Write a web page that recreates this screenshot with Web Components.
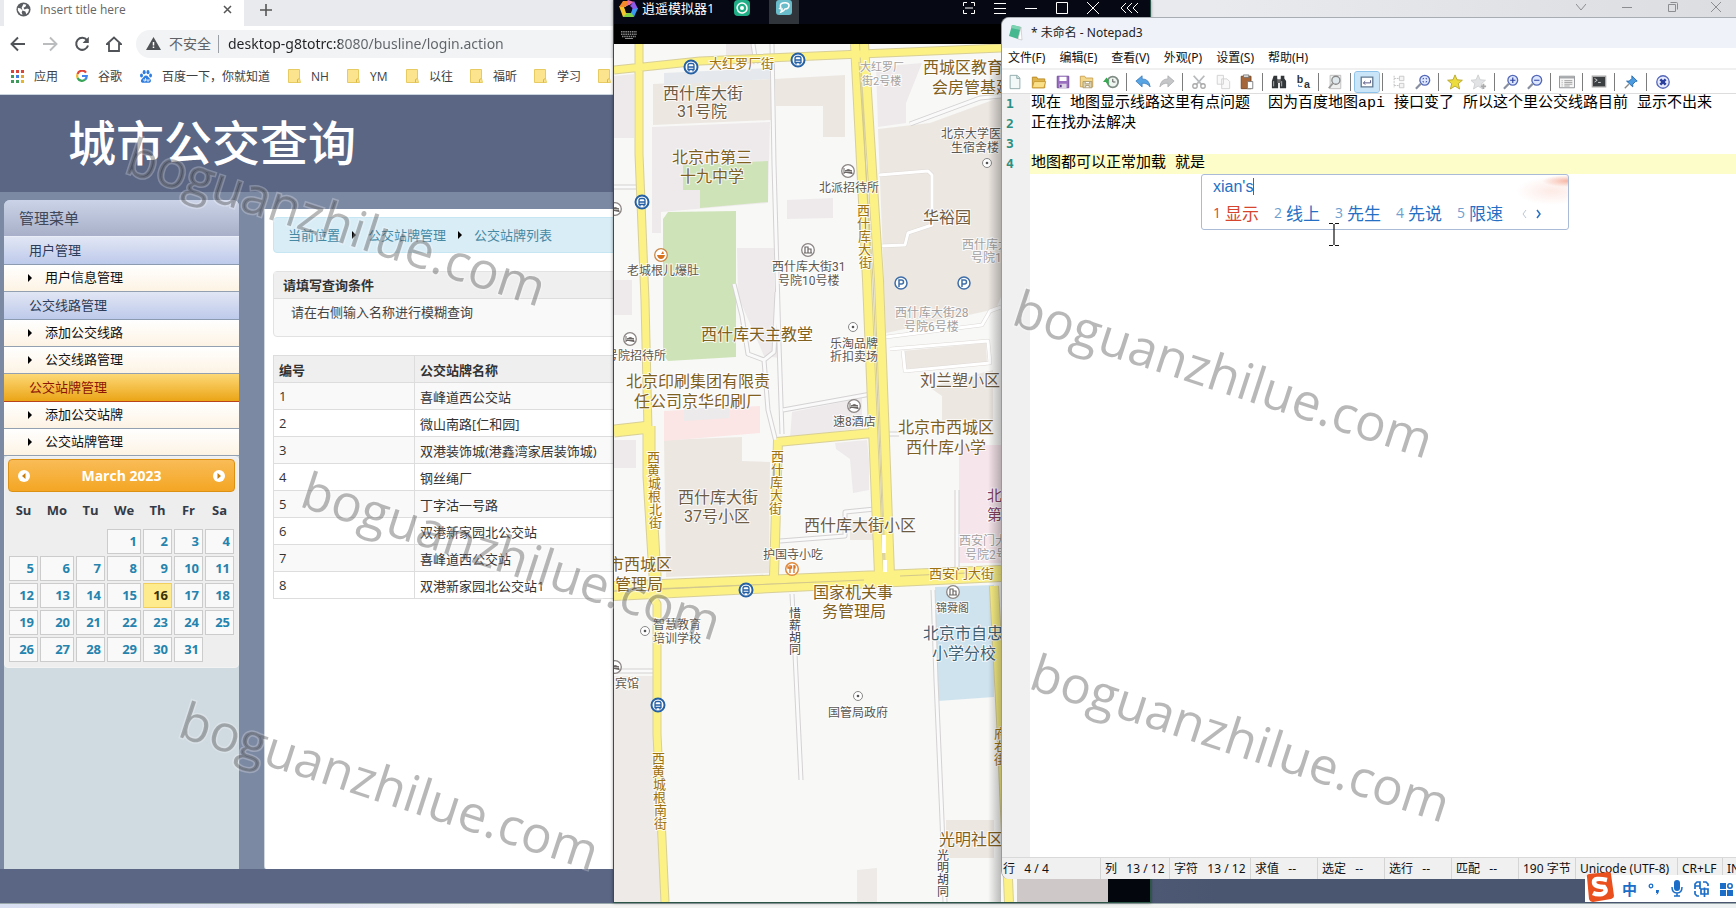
<!DOCTYPE html>
<html lang="zh-CN">
<head>
<meta charset="utf-8">
<title>城市公交查询</title>
<style>
html,body{margin:0;height:100%;overflow:hidden}
body{font-family:"Open Sans","Noto Sans CJK SC",sans-serif;font-size:13px;color:#222}
</style>
</head>
<body>
<desk-top>
  <browser-window slot="back"><bus-site></bus-site></browser-window>
  <emulator-window slot="middle"><city-map></city-map></emulator-window>
  <note-window slot="front"></note-window>
  <ime-popup slot="over"></ime-popup>
  <ime-tray slot="tray"></ime-tray>
  <water-marks slot="marks"></water-marks>
</desk-top>
<script>
const reset = `:host,*{box-sizing:border-box}button{font:inherit;color:inherit;background:none;border:0;padding:0;margin:0}a{color:inherit;text-decoration:none}svg{display:block;flex:none}`;
function define(name, css, html) {
  const tpl = document.createElement('template');
  tpl.innerHTML = `<style>${reset}${css}</style>${html}`;
  customElements.define(name, class extends HTMLElement {
    constructor() {
      super();
      this.attachShadow({mode: 'open'}).append(tpl.content.cloneNode(true));
    }
  });
}

/* ---------- desktop ---------- */
define('desk-top', `
:host{display:grid;grid-template-rows:minmax(0,1fr) 5px;height:100vh;position:relative;overflow:hidden;background:#eceff4}
.bar{background:linear-gradient(90deg,#d9dff2,#e6e9f4 20%,#f3f4f2 30%,#eef1f2);border-top:1px solid #9aa9ab}
::slotted([slot=middle]){position:absolute;left:613px;top:0;bottom:5px;width:538px}
::slotted([slot=front]){position:absolute;left:1001px;top:17px;right:0;bottom:29px}
::slotted([slot=over]){position:absolute;left:1201px;top:174px}
::slotted([slot=tray]){position:absolute;right:0;bottom:6px}
::slotted([slot=marks]){position:absolute;inset:0;pointer-events:none}
`, `<slot name="back"></slot><div class="bar"></div><slot name="middle"></slot><slot name="front"></slot><slot name="over"></slot><slot name="tray"></slot><slot name="marks"></slot>`);

/* ---------- browser ---------- */
const folder = `<svg width="13" height="14" viewBox="0 0 13 14"><path d="M.5.5h11v9l1 4H.5z" fill="#fce38d" stroke="#e6cb63"/><path d="M9.500 13.500v-3l2-1" fill="none" stroke="#d9b946"/></svg>`;
define('browser-window', `
:host{display:grid;grid-template-rows:26px 36px 33px minmax(0,1fr);background:#fff;min-width:0;min-height:0}
.tabs{display:flex;background:linear-gradient(90deg,#e8eaed 70%,#dcdde0);padding-left:4px;align-items:stretch;overflow:hidden}
.tab{display:flex;align-items:center;width:240px;background:#fff;padding:0 12px 7px 12px;color:#666;font-size:12px;gap:9px}
.tab span{flex:1}
.plus{width:44px;padding:0 0 7px;display:grid;place-items:center;border-bottom-left-radius:8px}
.win{margin-left:auto;display:flex;height:13px}
.win button{width:46px;display:grid;place-items:center}
.win button:last-child{width:40px}
.nav{display:flex;align-items:center;padding:0 0 1px 7px}
.nav>button{width:32px;height:32px;padding-right:10px;display:grid;place-items:center}
.omni{flex:1;height:28px;margin-left:1px;border-radius:14px 0 0 14px;background:#f1f3f4;display:flex;align-items:center;padding-left:10px;color:#5f6368;font-size:14px}
.omni span{margin-left:8px;padding-right:7px;border-right:1px solid #9aa0a6;line-height:18px}
.omni input{flex:1;min-width:0;border:0;outline:0;padding:0;margin-left:9px;height:24px;font:14px "Noto Sans",sans-serif;color:transparent;background:linear-gradient(90deg,#202124 112px,#5f6368 112px);-webkit-background-clip:text;background-clip:text}
.marks{display:flex;align-items:center;padding:0 0 4px 11px;font-size:12px;border-bottom:1px solid #c9d4de;white-space:nowrap;overflow:hidden}
.marks a{display:flex;align-items:center;gap:10px;margin-right:18px;color:#3c4043}
.marks svg+span{min-width:19px}
.marks .f{margin-right:17px}
`, `
<div class="tabs"><div class="tab"><svg width="15" height="15" viewBox="0 0 16 16"><circle cx="8" cy="8" r="7.500" fill="#5a5d61"/><path d="M2 6l3 1 2 2-1 2 1 2.500-2-.5L2 9zM8 2l3 1-1 2-2 1 1 2 3-1 2 1-1 3-2 2-1-3-3-1-1-3 1-2z" fill="#fff"/></svg><span>Insert title here</span><button aria-label="关闭标签页"><svg width="9" height="9" viewBox="0 0 9 9"><path d="M1 1l7 7M8 1L1 8" stroke="#555" stroke-width="1.500"/></svg></button></div>
<button class="plus" aria-label="新标签页"><svg width="12" height="12" viewBox="0 0 12 12"><path d="M6 0v12M0 6h12" stroke="#555" stroke-width="1.600"/></svg></button>
<div class="win"><button aria-label="更多"><svg width="10" height="10" viewBox="0 0 10 10"><path d="M0 2l5 6 5-6" fill="none" stroke="#8c8d90"/></svg></button><button aria-label="最小化"><svg width="10" height="10"><path d="M0 5.500h10" stroke="#8c8d90"/></svg></button><button aria-label="还原"><svg width="10" height="10" viewBox="0 0 10 10"><path d="M.5 2.500h7v7h-7zM2.500.5h6q1 0 1 1v6" fill="none" stroke="#8c8d90"/></svg></button><button aria-label="关闭"><svg width="10" height="10" viewBox="0 0 10 10"><path d="M0 0l10 10M10 0L0 10" stroke="#8c8d90"/></svg></button></div></div>
<div class="nav">
<button aria-label="后退"><svg width="16" height="16" viewBox="0 0 16 16"><path d="M15 8H2M8 1.500L1.500 8 8 14.500" fill="none" stroke="#505357" stroke-width="1.900"/></svg></button>
<button aria-label="前进"><svg width="16" height="16" viewBox="0 0 16 16"><path d="M1 8h13M8 1.500L14.500 8 8 14.500" fill="none" stroke="#babcbe" stroke-width="1.900"/></svg></button>
<button aria-label="刷新"><svg width="16" height="16" viewBox="0 0 16 16"><path d="M13 4.200A6 6 0 1 0 14 9.500" fill="none" stroke="#505357" stroke-width="2"/><path d="M14.800.8v6.200H8.600z" fill="#505357"/></svg></button>
<button aria-label="主页"><svg width="16" height="16" viewBox="0 0 16 16"><path d="M1 8l7-6.500L15 8h-2v7H3V8z" fill="none" stroke="#505357" stroke-width="1.800"/></svg></button>
<label class="omni"><svg width="15" height="13" viewBox="0 0 15 13"><path d="M7.500 0L15 13H0z" fill="#4f5256"/><path d="M7.500 5v3.500M7.500 9.500V11" stroke="#fff" stroke-width="1.500"/></svg><span>不安全</span><input value="desktop-g8totrc:8080/busline/login.action" aria-label="网址"></label></div>
<nav class="marks">
<a href="#"><svg width="13" height="13" viewBox="0 0 13 13"><path d="M0 0h3v3H0zM5 0h3v3H5zM10 0h3v3h-3z" fill="#d9453a"/><path d="M0 5h3v3H0z" fill="#3f9a5b"/><path d="M5 5h3v3H5z" fill="#3d7de0"/><path d="M10 5h3v3h-3z" fill="#e0a43a"/><path d="M0 10h3v3H0zM5 10h3v3H5z" fill="#3f9a5b"/><path d="M10 10h3v3h-3z" fill="#e6b72e"/></svg><span>应用</span></a>
<a href="#"><svg width="12" height="12" viewBox="0 0 12 12" fill="none" stroke-width="2.200"><path d="M10 2.600A4.800 4.800 0 0 0 1.600 4" stroke="#e2453a"/><path d="M1.600 4a4.800 4.800 0 0 0 0 4" stroke="#f2b92f"/><path d="M1.600 8A4.800 4.800 0 0 0 9 9.700" stroke="#38a457"/><path d="M9 9.700A5 5 0 0 0 10.800 6H6" stroke="#4284f0"/></svg><span>谷歌</span></a>
<a href="#"><svg width="12" height="13" viewBox="0 0 12 13" fill="#2f7de0"><ellipse cx="1.500" cy="5.500" rx="1.500" ry="2"/><ellipse cx="4.200" cy="2.200" rx="1.500" ry="2.100"/><ellipse cx="8" cy="2.200" rx="1.500" ry="2.100"/><ellipse cx="10.600" cy="5.500" rx="1.400" ry="2"/><path d="M6 5.500c2 0 2.500 2 4 3.300 2 2 .6 4.200-1.500 4-1.600-.2-3.400-.2-5 0C1 13 0 10.600 2 8.800 3.500 7.500 4 5.500 6 5.500z"/><path d="M4 9v2h1.500V8M7 9v2h2V9" stroke="#fff" stroke-width=".8" fill="none"/></svg><span>百度一下，你就知道</span></a>
<a href="#" class="f">${folder}<span>NH</span></a><a href="#" class="f">${folder}<span>YM</span></a><a href="#" class="f">${folder}<span>以往</span></a><a href="#" class="f">${folder}<span>福昕</span></a><a href="#" class="f">${folder}<span>学习</span></a><a href="#" aria-label="书签">${folder}</a>
</nav><slot></slot>`);

/* ---------- bus site ---------- */
define('bus-site', `
:host{display:grid;grid-template-rows:97px minmax(0,1fr) 34px;background:#5a6684;min-height:0}
h1{margin:0;padding:10px 0 0 68px;font:500 48px/70px "Noto Sans CJK SC",sans-serif;color:#fff}
.mid{display:grid;grid-template-columns:235px minmax(0,1fr);column-gap:25px;padding:8px 0 0 4px;background:#7c89a3;min-height:0}
main{background:#fff;border-left:1px solid #cfd6e0;border-bottom-left-radius:6px;margin:9px 0 -3px;padding:8px 0 0 8px}
footer{background:linear-gradient(90deg,#5a6684 50%,#4a5570 70%)}
`, `<h1>城市公交查询</h1><div class="mid"><side-menu></side-menu><main><crumb-bar></crumb-bar><hint-box></hint-box><station-table></station-table></main></div><footer></footer>`);

define('side-menu', `
:host{display:block;background:#cfdae1;border-radius:6px 6px 0 0;overflow:hidden}
h2{margin:0;height:37px;padding-left:15px;font:15px/36px "Noto Sans CJK SC",sans-serif;color:#41485a;background:linear-gradient(#cbd3e8,#a7b0c8);border-bottom:1px solid #e8edf8}
a{display:flex;align-items:center}
.g{height:28px;padding:0 0 3px 25px;background:linear-gradient(#e1e6f4,#becaeb);border-bottom:1px solid #8d9bb0;color:#2c3b57}
.g.on{background:linear-gradient(#fdd876,#eba516);border-bottom-color:#b9431a;color:#8c1505}
.i{height:27px;padding:0 0 3px 24px;gap:13px;background:linear-gradient(#fff,#fdf3e4);border-bottom:1px solid #93a0b2;color:#111}
.i:before{content:"";border:4px solid transparent;border-left-color:#000;border-right:0;margin-top:3px}
`, `<h2>管理菜单</h2><nav>
<a href="#" class="g">用户管理</a><a href="#" class="i">用户信息管理</a>
<a href="#" class="g">公交线路管理</a><a href="#" class="i">添加公交线路</a><a href="#" class="i">公交线路管理</a>
<a href="#" class="g on">公交站牌管理</a><a href="#" class="i">添加公交站牌</a><a href="#" class="i">公交站牌管理</a></nav><date-picker></date-picker>`);

const cells = [...Array(3).fill(0), ...Array.from({length: 31}, (_, i) => i + 1), 0];
const weeks = [0, 1, 2, 3, 4].map(w => '<tr>' + cells.slice(w * 7, w * 7 + 7).map(d => d ? `<td><a href="#"${d === 16 ? ' class="now"' : ''}>${d}</a></td>` : '<td></td>').join('') + '</tr>').join('');
define('date-picker', `
:host{display:block;background:#eee;padding:2px 3px 4px;border:1px solid #f3f3f3;border-radius:4px;font:bold 13px "Open Sans",sans-serif}
header{display:flex;align-items:center;justify-content:space-between;height:33px;padding:0 9px;border:1px solid #dd9114;border-radius:4px;background:linear-gradient(#f9bc57,#f4a624);color:#fff;font-size:14px}
table{width:100%;table-layout:fixed;border-collapse:collapse}
th{height:36px;padding:0;color:#333b47;font-size:13px}
td{padding:1px;height:27px}
td a{display:block;height:25px;line-height:23px;border:1px solid #ccc;background:#f9f9f9;color:#2583ad;text-align:right;padding-right:3px;font-size:13px}
td a.now{background:#fdeb8e;border-color:#f2cf5c;color:#3a3000}
`, `<header><button aria-label="Prev"><svg width="12" height="12" viewBox="0 0 12 12"><circle cx="6" cy="6" r="6" fill="#fff"/><path d="M7.500 3L4 6l3.500 3z" fill="#c77c08"/></svg></button><span>March 2023</span><button aria-label="Next"><svg width="12" height="12" viewBox="0 0 12 12"><circle cx="6" cy="6" r="6" fill="#fff"/><path d="M4.500 3L8 6 4.500 9z" fill="#c77c08"/></svg></button></header>
<table><colgroup><col style="width:31px"><col style="width:36px"><col style="width:31px"><col style="width:36px"><col style="width:31px"><col style="width:31px"><col></colgroup><thead><tr><th>Su</th><th>Mo</th><th>Tu</th><th>We</th><th>Th</th><th>Fr</th><th>Sa</th></tr></thead><tbody>${weeks}</tbody></table>`);

define('crumb-bar', `
:host{display:flex;align-items:center;height:36px;padding-left:14px;background:#d9edf7;border:1px solid #c5e6f2;border-radius:4px;color:#4788a3}
a{padding-bottom:2px}
i{width:4px;margin:0 12px;border:4px solid transparent;border-left-color:#000;border-right:0}
`, `<a href="#">当前位置</a><i></i><a href="#">公交站牌管理</a><i></i><a href="#">公交站牌列表</a>`);

define('hint-box', `
:host{display:block;height:66px;margin:18px 0;border:1px solid #e2e2e2;border-radius:4px;background:#f9f9f9}
h3{margin:0;height:27px;padding-left:9px;font:bold 13px/26px "Noto Sans CJK SC",sans-serif;background:#efefef;border-bottom:1px solid #ddd;color:#333}
p{margin:0;padding-left:17px;line-height:26px;color:#444}
`, `<h3>请填写查询条件</h3><p>请在右侧输入名称进行模糊查询</p>`);

define('station-table', `
:host{display:block}
table{width:100%;border-collapse:collapse;border:1px solid #ddd;table-layout:fixed}
th,td{height:27px;padding:0 5px;text-align:left;border:1px solid #ddd;color:#333}
th{background:#efefef}
tbody tr:nth-child(odd){background:#f9f9f9}
th:first-child{width:141px}
`, `<table><thead><tr><th>编号</th><th>公交站牌名称</th></tr></thead><tbody>${['喜峰道西公交站','微山南路[仁和园]','双港装饰城(港鑫湾家居装饰城)','钢丝绳厂','丁字沽一号路','双港新家园北公交站','喜峰道西公交站','双港新家园北公交站1'].map((n, i) => `<tr><td>${i + 1}</td><td>${n}</td></tr>`).join('')}</tbody></table>`);

/* ---------- emulator ---------- */
define('emulator-window', `
:host{display:grid;grid-template-rows:24px 20px minmax(0,1fr);background:#03060c;border:1px solid #2c5548;border-top:0;box-shadow:0 0 3px #0006}
header{display:flex;align-items:flex-start;background:#060913;color:#fff;padding-left:5px}
header span{width:94px;padding-left:4px;line-height:16px}
.t{display:flex;align-items:flex-start;width:30px;height:24px;margin-right:7px;padding-left:2px}
.t.on{background:#30343b;margin-right:0;padding-left:7px}
.c{margin-left:auto;display:flex;height:16px}
.c button{width:31px;display:grid;place-items:center}
.c button:last-child{width:42px}
.k{background:#000;padding:7px 0 0 7px}
::slotted(*){margin-right:42px}
`, `<header><svg width="19" height="18" viewBox="0 0 19 18"><path d="M9 0l6 2-6 4-6 1z" fill="#ee6ea0"/><path d="M15 1l4 8-5 2-3-5z" fill="#8e58e8"/><path d="M19 8l-4 9-5-3 4-5z" fill="#3b9af0"/><path d="M15 17H4l2-5h6z" fill="#7ed04a"/><path d="M4 17L0 6l5 1 3 6z" fill="#f5c52d"/><path d="M0 7l4-6 5 0-2 6z" fill="#f28a2a"/><path d="M9.500 5l4 3-1.500 5H7L5.500 8z" fill="#060913"/></svg><span>逍遥模拟器1</span>
<button class="t" aria-label="桌面"><svg width="16" height="16" viewBox="0 0 16 16"><rect width="16" height="16" rx="4" fill="#1fae86"/><path d="M3 8a5 5 0 0 1 10 0 5 5 0 0 1-9 3z" fill="none" stroke="#fff" stroke-width="1.500"/><circle cx="8" cy="8" r="2" fill="#fff"/></svg></button>
<button class="t on" aria-label="地图"><svg width="16" height="16" viewBox="0 0 16 16"><rect width="16" height="15" rx="3" fill="#69bcc9"/><path d="M5 8q-2-4 2-5 5-1 6 2 0 4-4 4-1 2-4 3 1-2 1-3-2 0-3-1" fill="none" stroke="#fff" stroke-width="1.600"/></svg></button>
<div class="c">
<button aria-label="全屏"><svg width="12" height="12" viewBox="0 0 12 12"><path d="M.5 4V.5H4M8 .5h3.500V4M11.500 8v3.500H8M4 11.500H.5V8M2 6h8" fill="none" stroke="#fff"/></svg></button>
<button aria-label="菜单"><svg width="12" height="12"><path d="M0 1.500h12M0 6.500h12M0 11.500h12" stroke="#fff"/></svg></button>
<button aria-label="最小化"><svg width="12" height="12"><path d="M0 6.500h12" stroke="#fff"/></svg></button>
<button aria-label="最大化"><svg width="12" height="12"><path d="M.5.5h11v11H.5z" fill="none" stroke="#fff"/></svg></button>
<button aria-label="关闭"><svg width="12" height="12"><path d="M0 0l12 12M12 0L0 12" stroke="#fff"/></svg></button>
<button aria-label="收起"><svg width="18" height="12"><path d="M6 1L1 6l5 5M12 1L7 6l5 5M18 1l-5 5 5 5" fill="none" stroke="#fff"/></svg></button></div></header>
<div class="k"><svg width="16" height="8" viewBox="0 0 16 8"><path d="M0 .8h16M0 3.200h16M1 5.500h14" stroke="#888" stroke-width="1.500" stroke-dasharray="1.500 .7"/><path d="M4 7.500h8" stroke="#888"/></svg></div><slot></slot>`);

/* map labels: x, centre y, size, text, colour */
const B = '#80601f', K = '#6d5b44', G = '#5c5750', L = '#a3a0a0', R = '#9d7110', D = '#454545', P = '#86405c', S = '#44606f';
const labels = [
[663,93,16,'西什库大街',K],[677,111,16,'31号院',K],[672,157,16,'北京市第三',B],[680,176,16,'十九中学',B],
[709,63,13,'大红罗厂街',R],[860,67,11,'大红罗厂',L],[862,81,11,'街2号楼',L],[923,67,16,'西城区教育',B],[932,87,16,'会房管基建',B],
[941,133,12,'北京大学医',G],[951,147,12,'生宿舍楼',G],[819,187,12,'北派招待所',G],[923,217,16,'华裕园',K],
[772,266,12,'西什库大街31',G],[778,280,12,'号院10号楼',G],[962,244,12,'西什库大街',L],[971,257,12,'号院1号',L],
[627,270,12,'老城根儿爆肚',G],[895,312,12,'西什库大街28',L],[904,326,12,'号院6号楼',L],[701,334,16,'西什库天主教堂',B],
[830,343,12,'乐淘品牌',G],[830,356,12,'折扣卖场',G],[606,355,12,'号院招待所',G],[626,381,16,'北京印刷集团有限责',B],[634,401,16,'任公司京华印刷厂',B],
[920,380,16,'刘兰塑小区',K],[833,421,12,'速8酒店',G],[898,427,16,'北京市西城区',B],[906,447,16,'西什库小学',B],
[678,497,16,'西什库大街',K],[684,516,16,'37号小区',K],[804,525,16,'西什库大街小区',K],[763,554,12,'护国寺小吃',G],
[608,564,16,'市西城区',B],[615,584,16,'管理局',B],[987,495,15,'北',P],[987,514,15,'第',P],[959,540,12,'西安门大',L],[965,554,12,'号院2号',L],
[929,573,13,'西安门大街',R],[813,592,16,'国家机关事',B],[822,611,16,'务管理局',B],[936,608,11,'锦舜阁',G],
[923,633,16,'北京市自忠',S],[932,653,16,'小学分校',S],[653,624,12,'智慧教育',G],[653,638,12,'培训学校',G],[615,683,12,'宾馆',G],
[828,712,12,'国管局政府',G],[939,839,16,'光明社区',B]
].map(([x, y, s, t, c]) => `<text x="${x}" y="${Math.round(y + s * .38)}" font-size="${s}" fill="${c}">${t}</text>`).join('');
const columns = [
[857,210,13,'西什库大街',R,1],[647,457,13,'西黄城根北街',R,1],[771,456,13,'西什库大街',R,-1],[789,613,12,'惜薪胡同',D,0],
[652,758,13,'西黄城根南街',R,1],[994,733,13,'府右街',R,0],[937,855,12,'光明胡同',D,0]
].map(([x, y, s, t, c, d]) => `<text x="${[...t].map((_, i) => x + d * Math.floor(i / 2)).join(' ')}" y="${[...t].map((_, i) => y + Math.round(s * .38) + i * (s === 13 ? 13 : 12)).join(' ')}" font-size="${s}" fill="${c}">${t}</text>`).join('');
const pin = (x, y, id) => `<use href="#${id}" x="${x}" y="${y}"/>`;
const pins = [[691,67,'bus'],[798,60,'bus'],[642,202,'bus'],[746,590,'bus'],[658,705,'bus'],[901,283,'park'],[964,283,'park'],
[987,163,'dot'],[853,327,'dot'],[645,631,'dot'],[858,696,'dot'],[848,171,'bed'],[630,339,'bed'],[854,406,'bed'],[615,209,'bed'],[615,667,'bed'],
[808,250,'bld'],[953,592,'bld'],[661,255,'food'],[792,569,'fork']].map(p => pin(...p)).join('');
const lane = 'M772 44l2 120 5 180 3 90M753 44l3 20M614 187h24M792 594l3 60 6 126M933 590l3 90 6 140 3 82M614 671h40M734 284l8 32 6 38 16 6 10-8 3-60M764 360l4 50 8 32M783 410l88-16M780 541l65-5v-24l30-3M957 490v78M887 434h12M910 124l70-26 21-2';
const whiteLane = 'M879 175l49-4 4 4v50l-24 8-3 12-26 1M886 337l96-12 8-14 11-4M890 349l98-8 2 22-85 8-2-20';
const mainRoads = 'M855 44l12 236 12 295M864 44l15 236 11 295M777 442l95-9M778 440l-4 136M614 586l387-16M614 596l240-12 147-7M994 586l7 134 8 182';
const cityRoads = 'M639 44v110l6 146 3 130M648 590l9 14v130l8 168M614 70l86-9 301-13';
const wideRoads = 'M649 426v50l7 116M614 431l36-4';
define('city-map', `
:host{display:block;position:relative;overflow:hidden;background:#f8f8f7}
svg{width:100%;height:100%}
text{font-family:Roboto,"Noto Sans CJK SC",sans-serif;paint-order:stroke;stroke:#fffc;stroke-width:2px}
`, `<svg viewBox="614 44 494 858" preserveAspectRatio="xMinYMin slice" role="img" aria-label="地图">
<defs>
<g id="bus"><circle r="6.500" fill="#fff" stroke="#2660a4" stroke-width="2"/><path d="M-3 2.500v-4q0-2 2-2h2q2 0 2 2v4zM-3 0h6M-2 2.500v2M2 2.500v2" fill="none" stroke="#2660a4" stroke-width="1.300"/></g>
<g id="park"><circle r="6" fill="#fff" stroke="#3f6ea8" stroke-width="1.500"/><path d="M-2 4v-7h2.500q2 0 2 2t-2 2H-2" fill="none" stroke="#3f6ea8" stroke-width="1.500"/></g>
<g id="dot"><circle r="4.500" fill="#fff" stroke="#888"/><circle r="1.300" fill="#555"/></g>
<g id="bed"><circle r="6.300" fill="#fff" stroke="#8b8684" stroke-width="1.300"/><path d="M-4-3v6M-4 1.500h8V3M-3 0q3-3 7 0z" fill="#6b6664" stroke="#6b6664"/></g>
<g id="bld"><circle r="6.300" fill="#fff" stroke="#8b8684" stroke-width="1.300"/><path d="M-3 3v-6h3v6M0-1h3v4M-4 3h8" fill="none" stroke="#6b6664" stroke-width="1.200"/></g>
<g id="food"><circle r="6.300" fill="#fff" stroke="#c98848" stroke-width="1.300"/><path d="M-4 0h8q-1 4-4 4T-4 0zM0-1l2-3 1 3z" fill="#d9721e"/></g>
<g id="fork"><circle r="6.300" fill="#fff" stroke="#e08a3a" stroke-width="1.500"/><path d="M-2-4v8M-4-3.500v2.500h3.500v-2.500M2-4v8M3-3.500v3" fill="none" stroke="#d9721e" stroke-width="1.300"/></g>
<linearGradient id="sh"><stop offset="0" stop-opacity="0"/><stop offset="1" stop-opacity=".25"/></linearGradient>
</defs>
<path fill="#eeeaeb" d="M652 127l118-5-2 81-107 9v21h-9zM614 76l20-2v64h-20zM737 248h37v30l6 80-16-2-26-60zM787 200l46-2v20l-46 1zM876 67l46-4-16 40v20l-28 4zM726 44h26v11l-26 2zM792 412l70-14v30l-72 10zM614 440l22 0v28h-22zM835 443l32-3 2 20v30l-16 3-3-34-14-10zM614 280l18 0v35h-18z"/>
<path fill="#ece7e1" d="M653 84l118-5v41l-118 5zM775 79l70-4v62h-22v-31h-47zM664 440l78-3v24l28 1-1 111-103 4zM878 129l52-6 71-26v200l-5 12-110 24zM902 351l84-8 1 20-84 6zM929 387l64-17v50h-51v-24zM946 820h48v38h-48zM850 520h24v20h-24z"/>
<path d="M614 676h40l5 160 4 66h-49zM857 870l20-2v34h-20z" fill="#edeae7"/>
<path d="M664 73l106-5v11l-106 6z" fill="#e5e9ed"/>
<path d="M683 165l85-4v41l-68 6v-18h-17zM668 212l68-1v146l-68 4-5-6V219z" fill="#cfe3b9"/>
<path d="M664 411l96-5v27l-96 8z" fill="#fbe5e5"/><path d="M959 445h42v118h-42z" fill="#f6e5ea"/>
<path d="M684 408h45v10l-45 3z" fill="#eceaea"/><path d="M935 587l59-2v112l-56 4z" fill="#cfe3ee"/>
<g fill="none" stroke-linejoin="round">
<path d="${lane}" stroke="#d4d2d2" stroke-width="5"/><path d="${lane}" stroke="#fafafa" stroke-width="3"/>
<path d="${whiteLane}" stroke="#ddd9d6" stroke-width="4"/><path d="${whiteLane}" stroke="#fff" stroke-width="3"/>
<g stroke="#d8cf98"><path d="${cityRoads}" stroke-width="9"/><path d="${wideRoads}" stroke-width="13"/><path d="${mainRoads}" stroke-width="10"/></g>
<g stroke="#fbf184"><path d="${cityRoads}" stroke-width="7"/><path d="${wideRoads}" stroke-width="11"/><path d="${mainRoads}" stroke-width="8"/></g>
<path d="M859 62l14 218 11 280M660 589l204-9M900 576l90-4" stroke="#d3c78c"/><path d="M884 535v18M885 560v12" stroke="#fff" stroke-width="4"/>
</g>
${pins}${labels}${columns}
<path d="M988 60h13v842h-13z" fill="url(#sh)"/><path d="M1017 872h91v30h-91z" fill="#cfc8c9"/>
</svg>`);

/* ---------- notepad ---------- */
const ico = {
new:'<path d="M3.500 1.500h8l3 3v12h-11z" fill="#f2f8f8" stroke="#8aa5a5"/><path d="M11 1.500v3.500h3.500" fill="#cfe3e3" stroke="#8aa5a5"/>',
open:'<path d="M1.500 15.500v-12h5l1 2h8v10z" fill="#e0b44c" stroke="#b98a24"/><path d="M1.500 15.500l2-7h13l-2 7z" fill="#fbe08a" stroke="#c99a30"/>',
save:'<path d="M2.500 2.500h13v13h-13z" fill="#9a6fc0" stroke="#70459c"/><path d="M5 3h8v5H5z" fill="#fff"/><path d="M5 11h8v5H5z" fill="#dcd4e4"/><path d="M6.500 12v3" stroke="#5d3a85" stroke-width="2"/>',
saveas:'<path d="M1.500 14.500v-12h5l1 2h8v10z" fill="#f3d88c" stroke="#c9a050"/><path d="M4.500 8.500h10v7h-10z" fill="#dcd2b4" stroke="#a89a70"/><path d="M7 9v2h5V9M7.500 15v-2h4v2" fill="#fff" stroke="#a89a70"/>',
hist:'<circle cx="11" cy="9" r="6" fill="#eef5f0" stroke="#7f8c85" stroke-width="2"/><path d="M11 5.500V9h3M6 9h1" stroke="#444" fill="none"/><path d="M0 9l4-5 3 4H6l1 5-3-3-1-1z" fill="#38a852"/>',
undo:'<path d="M1 8l7-6v3.500q8 0 9 9-3-4.500-9-4v4z" fill="#59a5e4" stroke="#2f74b8" stroke-width=".8"/>',
redo:'<path d="M17 8l-7-6v3.500q-8 0-9 9 3-4.500 9-4v4z" fill="#c4c6c8" stroke="#a6a8aa" stroke-width=".8"/>',
cut:'<path d="M3 2l9 10M15 2L6 12" stroke="#b8babc" stroke-width="2"/><circle cx="4.500" cy="13.500" r="2.500" fill="none" stroke="#aaa" stroke-width="1.500"/><circle cx="13.500" cy="13.500" r="2.500" fill="none" stroke="#aaa" stroke-width="1.500"/>',
copy:'<path d="M2.500 1.500h7v10h-7zM7.500 5.500h6l3 3v8h-9z" fill="#f9f9f9" stroke="#d0d0d0"/>',
paste:'<path d="M2.500 2.500h11v14h-11z" fill="#a5673a" stroke="#774420"/><path d="M5 1h6v3H5z" fill="#d8d8d8" stroke="#666" stroke-width=".8"/><path d="M9.500 8.500h6v8h-6z" fill="#fff" stroke="#777"/>',
find:'<path d="M3 2h4v3l1 2v9H1V8zM11 2h4v3l2 3v8h-7V7l1-2z" fill="#33373a"/><path d="M7 6h4v4H7z" fill="#666"/><path d="M3 8v6M12 8v6" stroke="#bbb"/>',
repl:'<text x="2" y="10" font-size="12" font-weight="bold" fill="#333" font-family="Liberation Sans">b</text><text x="10" y="16" font-size="12" font-weight="bold" fill="#333" font-family="Liberation Sans">a</text><path d="M4 12v2h4" stroke="#36a" fill="none"/>',
view:'<path d="M3.500 1.500h12v15h-12z" fill="#eef0f0" stroke="#bbb"/><circle cx="10" cy="7" r="4.500" fill="#dfe8ec" stroke="#888" stroke-width="1.500"/><path d="M6.500 10.500L2 16" stroke="#999" stroke-width="2"/>',
wrap:'<path d="M2.500 3.500h13v11h-13z" fill="#fff" stroke="#627a90" stroke-width="1.500"/><path d="M13 7v3H5M7 8l-2 2 2 2" fill="none" stroke="#447"/>',
fold:'<path d="M3.500 2v13M3.500 5h6M3.500 13h6" stroke="#bbb" stroke-dasharray="2 1" fill="none"/><path d="M9.500 2.500h5v5h-5zM9.500 10.500h5v5h-5z" fill="#f4f4f4" stroke="#c6c6c6"/>',
zoom:'<circle cx="11" cy="7" r="5.500" fill="#dce6ff" stroke="#5468b8" stroke-width="1.500"/><path d="M6.500 11L1 16.500" stroke="#888fa0" stroke-width="2.500"/>',
star:'<path d="M9 1l2.300 5.500 6 .5-4.600 3.900 1.500 6L9 13.600l-5.200 3.300 1.500-6L.7 7l6-.5z" fill="#ecdc3e" stroke="#b5a52a"/>',
star2:'<path d="M8 1l2.300 5.500 6 .5-4.600 3.900 1.500 6L8 13.600l-5.200 3.300 1.500-6L-.3 7l6-.5z" fill="#e2e3e5" stroke="#ccced0"/><path d="M14 11v6M11 14h6" stroke="#aaa" stroke-width="2"/>',
list:'<path d="M.5 2.500h17v13H.5z" fill="#f6f6f6" stroke="#85898c"/><path d="M1 4h16" stroke="#a6a9ab" stroke-width="2"/><path d="M3 7.500h1M3 9.500h1M3 11.500h1M3 13.500h1M6 7.500h9M6 9.500h9M6 11.500h9M6 13.500h6" stroke="#999"/>',
term:'<path d="M1.500 2.500h15v12h-15z" fill="#3c3f42" stroke="#aaa" stroke-width="1.500"/><path d="M4 5l3 2-3 2M8 9.500h3" stroke="#ddd" fill="none"/>',
pinn:'<path d="M10 2l6 6-2 .5-3 3v3L4 8h3l3-3z" fill="#4b9ae0" stroke="#2668a8"/><path d="M6.500 11.500L2 16" stroke="#888" stroke-width="1.500"/>',
exit:'<circle cx="9" cy="9" r="7" fill="#e6ebff" stroke="#5566b8" stroke-width="1.500"/><path d="M6 6l6 6M12 6l-6 6" stroke="#2c3f9c" stroke-width="2.800"/>'
};
ico.fit = ico.zoom + '<path d="M9 6V5h1M12 5h1v1M13 8v1h-1M10 9H9V8" stroke="#2c3f9c" fill="none"/>';
ico.zin = ico.zoom + '<path d="M8 7h6M11 4v6" stroke="#2c3f9c" stroke-width="1.300"/>';
ico.zout = ico.zoom + '<path d="M8 7h6" stroke="#2c3f9c" stroke-width="1.300"/>';
const tools = 'new 新建,open 打开,save 保存,saveas 另存为,hist 历史,|,undo 撤销,redo 重做,|,cut 剪切,copy 复制,paste 粘贴,|,find 查找,repl 替换,|,view 预览,|,wrap 自动换行,|,fold 折叠,fit 适应,|,star 收藏,star2 添加收藏,|,zin 放大,zout 缩小,|,list 方案,|,term 终端,|,pinn 置顶,|,exit 退出'.split(',').map(t => {
  if (t === '|') return '<i></i>';
  const [k, n] = t.split(' ');
  return `<button aria-label="${n}"${k === 'wrap' ? ' class="on"' : ''}><svg width="16" height="16" viewBox="0 0 18 18">${ico[k]}</svg></button>`;
}).join('');
define('tool-bar', `
:host{display:flex;align-items:center;padding:0 1px;background:#fff;border-top:2px solid #f0f0f0;border-bottom:1px solid #ddd}
button{width:24px;height:20px;display:grid;place-items:center}
.on{background:#cbe5f8;outline:1px solid #8fc3ea;border-radius:2px}
i{width:1px;height:18px;margin:0 4px 0 3px;background:#7c7c7c}
`, tools);

define('status-bar', `
:host{display:flex;align-items:stretch;background:#f0f0f0;border-top:1px solid #d9d9d9;font:12px/22px "Noto Sans","Noto Sans CJK SC",sans-serif;color:#111;white-space:pre;overflow:hidden}
span{padding:0 0 0 4px;border-left:1px solid #d5d5d5;width:67px;flex:none}
.l{width:98px;padding-left:1px;border:0}
.p{width:69px}.q{width:81px}.r{width:57px}.u{width:102px}.c{width:45px}
`, `<span class="l">行   4 / 4</span><span class="p">列   13 / 12</span><span class="q">字符   13 / 12</span><span>求值   --</span><span>选定   --</span><span>选行   --</span><span>匹配   --</span><span class="r">190 字节</span><span class="u">Unicode (UTF-8)</span><span class="c">CR+LF</span><span>INS</span>`);

define('note-window', `
:host{display:grid;grid-template-rows:30px 20px 26px minmax(0,1fr) 22px;background:#fff;border-radius:8px 0 0 8px;overflow:hidden;border-left:1px solid #999;border-top:1px solid #a8adb3;font-family:"Noto Sans","Noto Sans CJK SC",sans-serif;font-size:12px}
header{display:flex;align-items:center;gap:7px;padding:0 0 2px 6px;background:#eff3f9;color:#222}
nav{display:flex;align-items:center;gap:14px;padding:0 0 2px 6px;color:#111}
.ed{display:grid;grid-template-columns:28px minmax(0,1fr);min-height:0}
ol{margin:0;padding:0 0 0 4px;list-style:none;background:#f0f0f0;font:bold 13px/20px "DejaVu Sans Mono",monospace;color:#2c8f80}
textarea{border:0;outline:0;resize:none;padding:0 0 0 1px;margin:0;font:15px/20px "Liberation Mono","Noto Sans CJK SC",monospace;color:#000;white-space:pre;overflow:hidden;background:linear-gradient(#fdfdc9,#fdfdc9) 0 60px/100% 20px no-repeat #fff}
`, `<header><svg width="16" height="17" viewBox="0 0 16 17"><path d="M4 1l9 2-3 12-9-3z" fill="#45b890"/><path d="M4 1l9 2-1 3-9-2z" fill="#7cd3b2"/><path d="M13 3l1 13-4-1z" fill="#fff" stroke="#bbb" stroke-width=".6"/></svg><span>* 未命名 - Notepad3</span></header>
<nav><button>文件(F)</button><button>编辑(E)</button><button>查看(V)</button><button>外观(P)</button><button>设置(S)</button><button>帮助(H)</button></nav>
<tool-bar></tool-bar>
<div class="ed"><ol><li>1</li><li>2</li><li>3</li><li>4</li></ol><textarea aria-label="文本编辑" spellcheck="false">现在 地图显示线路这里有点问题  因为百度地图api 接口变了 所以这个里公交线路目前 显示不出来
正在找办法解决

地图都可以正常加载 就是</textarea></div>
<status-bar></status-bar>`);

/* ---------- input method ---------- */
define('ime-popup', `
:host{display:grid;grid-template-rows:26px 1fr;width:368px;height:56px;background:radial-gradient(ellipse 26px 6px at 366px 6px,#f6b5a3,transparent),radial-gradient(ellipse 36px 14px at 350px 16px,#fdeae5,transparent),#fff;border:1px solid #a9bbd6;border-radius:3px;padding:0 11px;color:#2570c4}
.in{font:16px/24px "Liberation Sans",sans-serif}
.in b{display:inline-block;width:1px;height:17px;background:#c33;vertical-align:-3px}
.c{display:flex;gap:15px;align-items:center;margin-top:-6px}
.c button{display:flex;gap:4px;align-items:center;width:46px;font-size:17px;white-space:nowrap}
small{font-size:14px;color:#6fa0cf}
.r,.r small{color:#d6452e}
.c svg{margin:4px 0 0 4px}
.cur{position:absolute;left:126px;top:47px}
`, `<div class="in">xian's<b></b></div><div class="c"><button class="r"><small>1</small>显示</button><button><small>2</small>线上</button><button><small>3</small>先生</button><button><small>4</small>先说</button><button><small>5</small>限速</button><svg width="20" height="10" viewBox="0 0 20 10"><path d="M4 1L1 5l3 4" fill="none" stroke="#bcc6d4"/><path d="M15 1l3 4-3 4" fill="none" stroke="#2570c4" stroke-width="1.500"/></svg></div>
<svg class="cur" width="12" height="25" viewBox="0 0 12 25"><path d="M1 1.500h4M7 1.500h4M6 2v21M1 23.500h4M7 23.500h4" stroke="#111" stroke-width="1.200"/></svg>`);

define('ime-tray', `
:host{display:flex;align-items:center;gap:11px;height:27px;width:151px;background:#fff;color:#1b6dc8;border-radius:4px 0 0 0}
.s{margin:-4px -4px 0 -1px}
.z{font:bold 15px/24px "Noto Sans CJK SC",sans-serif}
`, `<svg class="s" width="31" height="30" viewBox="0 0 31 30"><path d="M3 5Q2 3 5 2l19-2q3 0 3 2l3 22q0 2-3 3L9 30q-3 0-4-3z" fill="#e9501d"/><path d="M23 8Q10 5 10 10t10 5q4 5-2 7-5 1-9-1" fill="none" stroke="#fff" stroke-width="4.500"/></svg>
<button class="z">中</button><button aria-label="标点"><svg width="12" height="16" viewBox="0 0 12 16"><circle cx="3" cy="5" r="1.800" fill="none" stroke="#1b6dc8" stroke-width="1.300"/><path d="M8 9h3q0 4-3 5 1-1 1-2H8z" fill="#1b6dc8"/></svg></button>
<button aria-label="语音"><svg width="12" height="17" viewBox="0 0 12 17"><rect x="3" y="0" width="6" height="11" rx="3" fill="#1b6dc8"/><path d="M1 7q0 6 5 6t5-6M6 13v3M3 16h6" fill="none" stroke="#1b6dc8" stroke-width="1.500"/></svg></button>
<button aria-label="翻译"><svg width="15" height="16" viewBox="0 0 15 16"><path d="M1 8V3l2-2h3v7M1 5h5M9 1h3l2 2v2M1 10v3l2 2h2M7 8h7v5H7zM10.500 6.500V16" fill="none" stroke="#1b6dc8" stroke-width="1.700"/></svg></button>
<button aria-label="工具箱"><svg width="13" height="14" viewBox="0 0 13 14"><path d="M0 1h6v6H0zM0 8h6v6H0zM7 8h6v6H7z" fill="#1b6dc8"/><circle cx="10" cy="4" r="2.200" fill="none" stroke="#1b6dc8" stroke-width="1.600"/></svg></button>`);

/* ---------- watermark ---------- */
define('water-marks', `
:host{display:block}
svg{width:100%;height:100%}
text{font:51px "Open Sans",sans-serif;fill:#30303058;stroke:#ffffff40;stroke-width:3px;paint-order:stroke}
`, `<svg aria-hidden="true">${[[123,172],[298,506],[176,736],[1010,324],[1027,688]].map(([x, y]) => `<text transform="translate(${x} ${y}) rotate(18)">boguanzhilue.com</text>`).join('')}</svg>`);
</script>
</body>
</html>
